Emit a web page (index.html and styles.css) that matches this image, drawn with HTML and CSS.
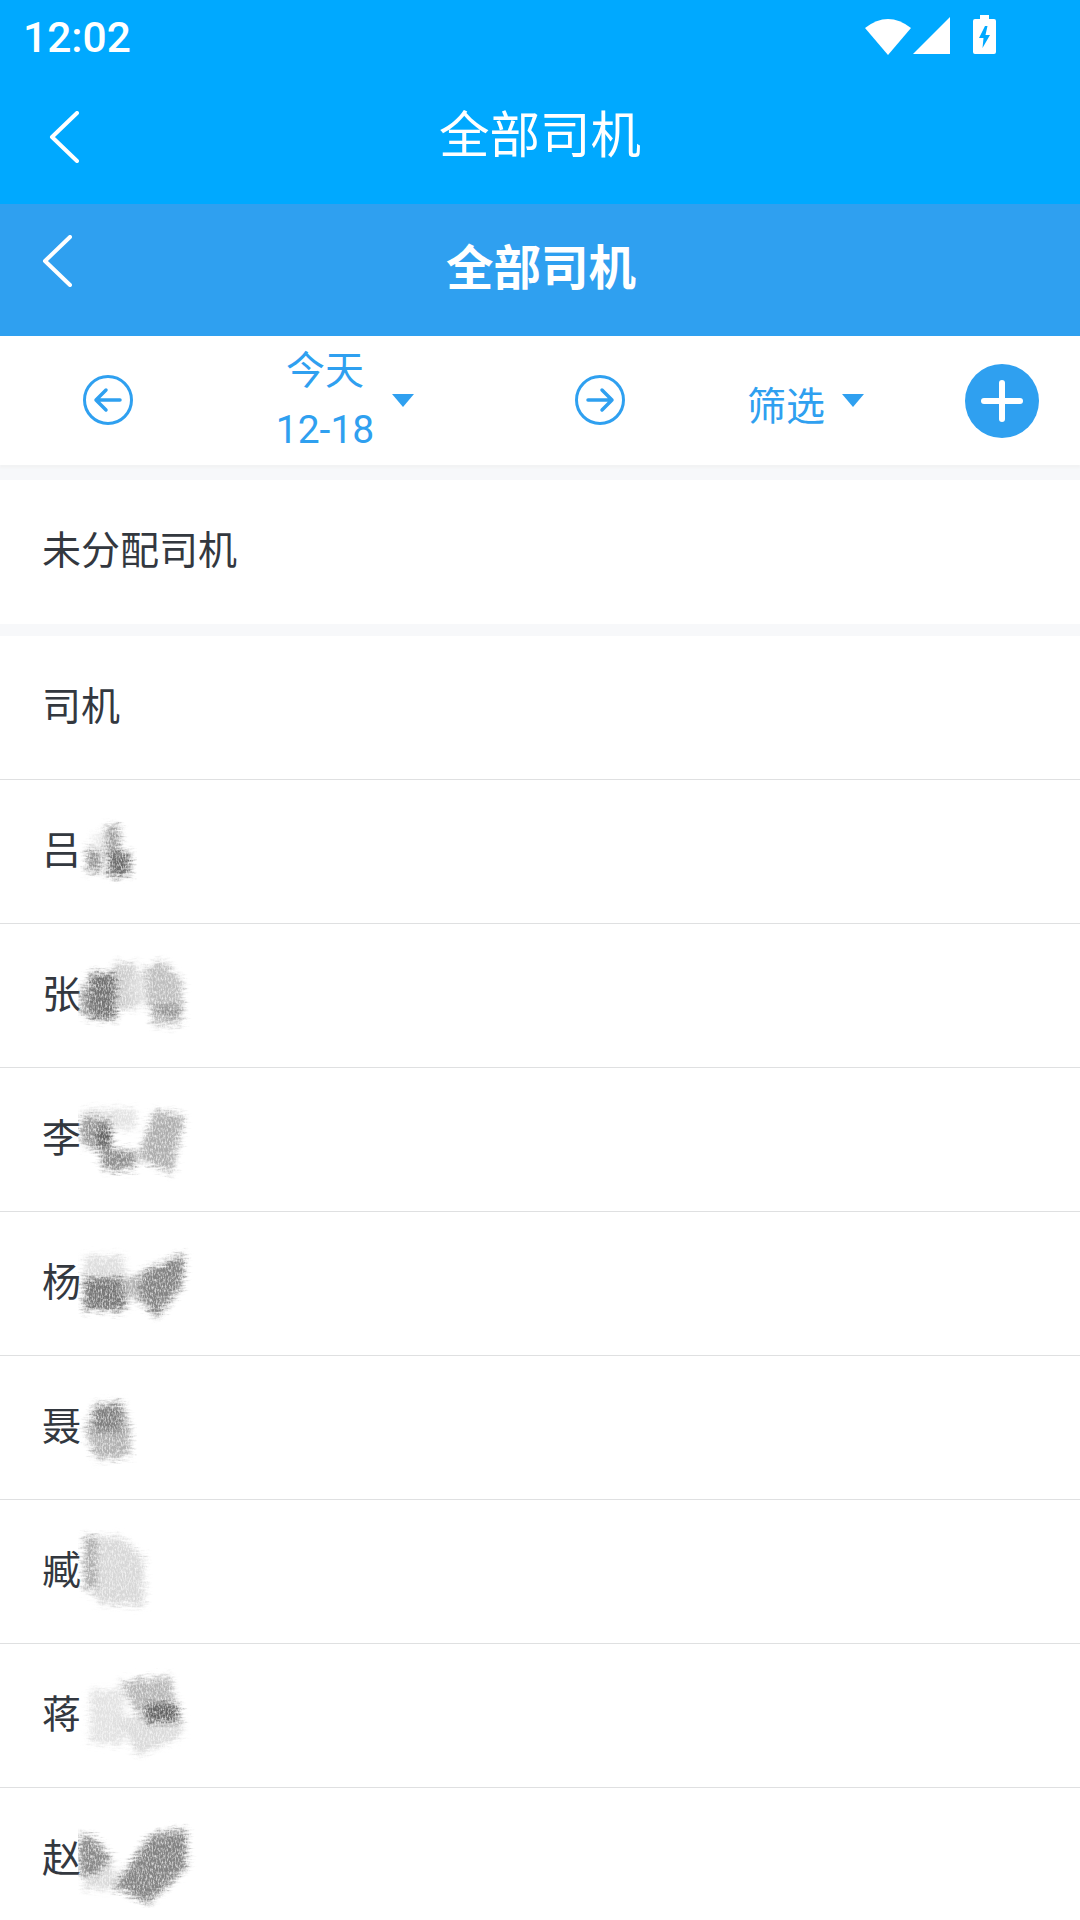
FILE: index.html
```html
<!DOCTYPE html>
<html>
<head>
  <meta charset="UTF-8">
  <title>全部司机</title>
  <link rel="stylesheet" href="styles.css">
</head>
<body>

<svg class="defs" width="0" height="0">
  <filter id="pencil" x="-15%" y="-15%" width="130%" height="130%" color-interpolation-filters="sRGB">
    <feGaussianBlur in="SourceGraphic" stdDeviation="3" result="soft"/>
    <feTurbulence type="fractalNoise" baseFrequency="0.09 0.5" numOctaves="3" seed="7" result="rag"/>
    <feDisplacementMap in="soft" in2="rag" scale="14" xChannelSelector="R" yChannelSelector="G" result="rough"/>
    <feTurbulence type="fractalNoise" baseFrequency="0.7 0.3" numOctaves="3" seed="3" result="noise"/>
    <feColorMatrix in="noise" type="matrix" values="0 0 0 0 0  0 0 0 0 0  0 0 0 0 0  1.8 0 0 0 -0.05" result="grain"/>
    <feComposite in="rough" in2="grain" operator="in"/>
  </filter>
</svg>

<div class="app-bar">
  <div class="status-bar">
    <span class="clock">12:02</span>
    <div class="status-icons">
      <svg class="icon-wifi" width="46" height="38" viewBox="0 0 46 38"><path d="M0 11 Q23 -7 46 11 L23 38 Z" fill="#fff"/></svg>
      <svg class="icon-signal" width="38" height="38" viewBox="0 0 38 38"><path d="M37 0 V37 H0 Z" fill="#fff"/></svg>
      <svg class="icon-battery" width="23" height="39" viewBox="0 0 23 39"><path fill-rule="evenodd" fill="#fff" d="M7 0 H16 V4 H21 Q23 4 23 6 V37 Q23 39 21 39 H2 Q0 39 0 37 V6 Q0 4 2 4 H7 Z M12 11 L6 23 H10.5 L9.5 33 L17 20 H12.5 L14.5 11 Z"/></svg>
    </div>
  </div>
  <div class="app-title">
    <svg class="back" width="30" height="52" viewBox="0 0 30 52"><path d="M28 2 L3 26 L28 50" fill="none" stroke="#fff" stroke-width="4" stroke-linecap="round" stroke-linejoin="round"/></svg>
    <span>全部司机</span>
  </div>
</div>

<div class="sub-bar">
  <svg class="back" width="30" height="52" viewBox="0 0 30 52"><path d="M28 2 L3 26 L28 50" fill="none" stroke="#fff" stroke-width="4" stroke-linecap="round" stroke-linejoin="round"/></svg>
  <span>全部司机</span>
</div>

<div class="toolbar">
  <svg class="arrow" width="50" height="50" viewBox="0 0 50 50"><circle cx="25" cy="25" r="23.5" fill="none" stroke="#2fa0f0" stroke-width="3"/><path d="M37 25 H13 M23 15 L13 25 L23 35" fill="none" stroke="#2fa0f0" stroke-width="3.5" stroke-linecap="round" stroke-linejoin="round"/></svg>
  <div class="date">
    <span>今天</span>
    <span>12-18</span>
  </div>
  <span class="caret"></span>
  <svg class="arrow next" width="50" height="50" viewBox="0 0 50 50"><circle cx="25" cy="25" r="23.5" fill="none" stroke="#2fa0f0" stroke-width="3"/><path d="M13 25 H37 M27 15 L37 25 L27 35" fill="none" stroke="#2fa0f0" stroke-width="3.5" stroke-linecap="round" stroke-linejoin="round"/></svg>
  <span class="filter">筛选</span>
  <span class="caret caret-filter"></span>
  <div class="add"><span class="add-h"></span><span class="add-v"></span></div>
</div>

<div class="row single"><span class="name">未分配司机</span></div>

<div class="list">
  <div class="row"><span class="name">司机</span></div>
  <div class="row"><span class="name">吕</span>
    <svg class="scribble" width="120" height="96" viewBox="0 0 120 96"><g filter="url(#pencil)">
      <rect x="9" y="44" width="14" height="24" fill="#777"/><rect x="27" y="22" width="15" height="28" fill="#888"/><rect x="30" y="48" width="22" height="24" fill="#4d4d4d"/><rect x="14" y="30" width="14" height="18" fill="#e6e6e6"/>
    </g></svg>
  </div>
  <div class="row"><span class="name">张</span>
    <svg class="scribble" width="120" height="96" viewBox="0 0 120 96"><g filter="url(#pencil)">
      <rect x="36" y="15" width="22" height="46" fill="#c4c4c4"/><rect x="2" y="40" width="14" height="26" fill="#888"/><rect x="11" y="25" width="27" height="46" fill="#555"/><polygon points="50,36 64,22 66,56 56,58" fill="#d4d4d4"/><polygon points="66,20 84,12 104,34 104,76 76,78 68,50" fill="#b0b0b0"/><rect x="78" y="58" width="26" height="9" fill="#6e6e6e"/>
    </g></svg>
  </div>
  <div class="row"><span class="name">李</span>
    <svg class="scribble" width="120" height="96" viewBox="0 0 120 96"><g filter="url(#pencil)">
      <rect x="6" y="17" width="52" height="20" fill="#dcdcdc"/><polygon points="2,24 32,28 34,62 4,52" fill="#808080"/><rect x="20" y="36" width="13" height="22" fill="#3c3c3c"/><polygon points="20,54 60,60 54,78 26,78" fill="#767676"/><polygon points="76,18 106,24 94,82 60,66" fill="#9c9c9c"/>
    </g></svg>
  </div>
  <div class="row"><span class="name">杨</span>
    <svg class="scribble" width="120" height="96" viewBox="0 0 120 96"><g filter="url(#pencil)">
      <rect x="6" y="20" width="40" height="24" fill="#d6d6d6"/><rect x="6" y="42" width="42" height="32" fill="#585858"/><rect x="44" y="40" width="18" height="22" fill="#a4a4a4"/><polygon points="64,36 106,18 104,50 78,82 60,60" fill="#686868"/>
    </g></svg>
  </div>
  <div class="row"><span class="name">聂</span>
    <svg class="scribble" width="120" height="96" viewBox="0 0 120 96"><g filter="url(#pencil)">
      <polygon points="7,50 18,24 44,22 52,48 52,76 18,80" fill="#a0a0a0"/><rect x="16" y="26" width="28" height="26" fill="#646464"/>
    </g></svg>
  </div>
  <div class="row"><span class="name">臧</span>
    <svg class="scribble" width="120" height="96" viewBox="0 0 120 96"><g filter="url(#pencil)">
      <polygon points="10,12 44,14 66,34 66,82 20,80 12,60" fill="#cfcfcf"/><rect x="6" y="12" width="12" height="54" fill="#999"/>
    </g></svg>
  </div>
  <div class="row"><span class="name">蒋</span>
    <svg class="scribble" width="120" height="96" viewBox="0 0 120 96"><g filter="url(#pencil)">
      <rect x="12" y="22" width="34" height="54" fill="#dcdcdc"/><polygon points="38,50 104,46 104,68 60,88" fill="#d2d2d2"/><polygon points="42,14 92,8 98,44 60,48" fill="#a6a6a6"/><rect x="68" y="36" width="32" height="18" fill="#434343"/>
    </g></svg>
  </div>
  <div class="row"><span class="name">赵</span>
    <svg class="scribble" width="120" height="96" viewBox="0 0 120 96"><g filter="url(#pencil)">
      <rect x="6" y="54" width="32" height="24" fill="#d4d4d4"/><polygon points="1,22 16,26 34,48 16,64 1,62" fill="#707070"/><polygon points="36,74 74,22 108,18 108,56 70,92" fill="#686868"/>
    </g></svg>
  </div>
</div>

</body>
</html>
```

FILE: styles.css
```css
html, body {
  margin: 0;
  height: 1920px;
  overflow: hidden;
}

body {
  background: #f7f8fa;
  font-family: Roboto, "Noto Sans CJK SC", sans-serif;
  color: #33383f;
}

.defs {
  display: block;
  height: 0;
}

/* top app header */
.app-bar {
  height: 204px;
  background: #00a9ff;
  color: #fff;
}

.status-bar {
  height: 74px;
  display: flex;
  align-items: center;
  justify-content: space-between;
  padding: 0 84px 0 23px;
}

.clock {
  font-size: 42.5px;
  font-weight: 500;
}

.status-icons {
  display: flex;
  align-items: flex-start;
  margin-top: -3px;
}

.icon-signal {
  margin-left: 2px;
}

.icon-battery {
  margin-left: 22px;
  margin-top: -2px;
}

.app-title {
  display: flex;
  align-items: center;
  height: 122px;
  padding-left: 49px;
  font-size: 50.5px;
}

.app-title .back {
  margin-top: 3px;
}

.app-title span {
  margin-left: 360px;
  margin-bottom: 8px;
}

.sub-bar {
  height: 132px;
  background: #2fa0f0;
  color: #fff;
  display: flex;
  padding-left: 42px;
  font-size: 47.5px;
  font-weight: 700;
}

.sub-bar .back {
  margin-top: 31px;
}

.sub-bar span {
  margin-left: 374px;
  line-height: 130px;
}

/* date and filter strip */
.toolbar {
  height: 129px;
  background: #fff;
  display: flex;
  align-items: center;
  padding-left: 83px;
  color: #2fa0f0;
  font-size: 39px;
  box-shadow: 0 3px 2px #f2f3f4;
}

.arrow {
  margin-top: -2px;
}

.date {
  display: flex;
  flex-direction: column;
  align-items: center;
  line-height: 59px;
  margin-left: 144px;
  width: 96px;
  white-space: nowrap;
}

.caret {
  width: 0;
  height: 0;
  margin-left: 19px;
  border-left: 11px solid transparent;
  border-right: 11px solid transparent;
  border-top: 13px solid #2fa0f0;
}

.arrow.next {
  margin-left: 161px;
}

.filter {
  margin-left: 122px;
  margin-top: 4px;
}

.caret-filter {
  margin-left: 17px;
}

.add {
  position: relative;
  width: 74px;
  height: 74px;
  margin-left: 101px;
  border-radius: 50%;
  background: #2fa0f0;
}

.add-h, .add-v {
  position: absolute;
  background: #fff;
  border-radius: 3px;
}

.add-h {
  left: 16px;
  top: 34px;
  width: 42px;
  height: 6px;
}

.add-v {
  left: 34px;
  top: 16px;
  width: 6px;
  height: 42px;
}

/* driver rows */
.row {
  display: flex;
  align-items: center;
  height: 143px;
  padding-left: 42px;
  background: #fff;
  font-size: 39px;
  border-bottom: 1px solid #dfe0e1;
}

.row.single {
  height: 144px;
  margin-top: 15px;
  border-bottom: 0;
}

.name {
  margin-bottom: 10px;
}

.list {
  margin-top: 12px;
}

.scribble {
  flex: none;
  margin-left: -3px;
  opacity: 0.82;
}
```
